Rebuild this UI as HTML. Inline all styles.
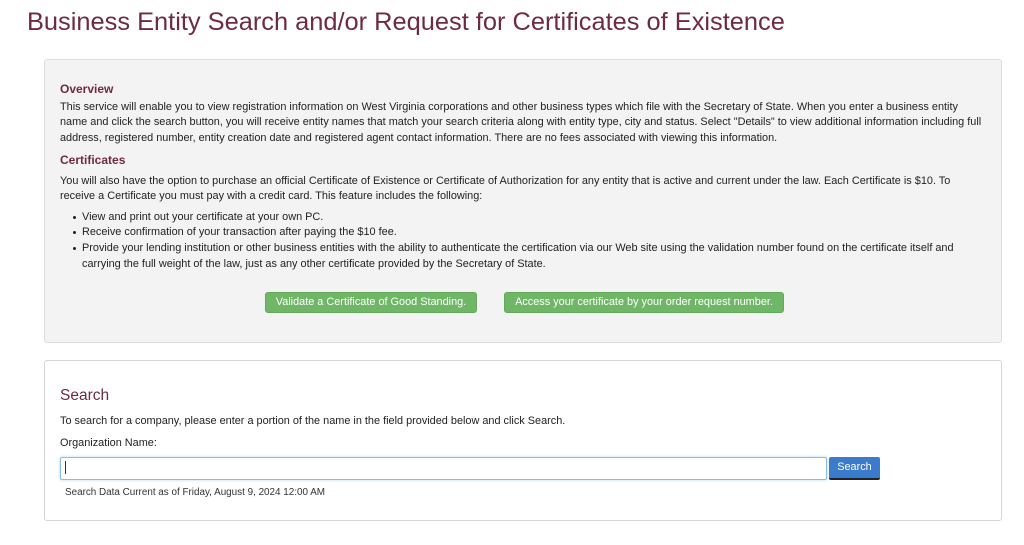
<!DOCTYPE html>
<html><head><style>
body{margin:0;width:1024px;height:545px;background:#fff;font-family:"Liberation Sans",Arial,sans-serif;position:relative;overflow:hidden;color:#222}
.a{position:absolute;white-space:nowrap}
.t{font-size:10.9px;left:60px}
h1{position:absolute;left:27px;top:8px;margin:0;font-weight:normal;font-size:25.4px;color:#6e2b3f}
.h{font-weight:bold;font-size:12px;color:#6e2b3f;left:60px}
.p1{position:absolute;left:44px;top:59px;width:956px;height:282px;background:#f3f3f3;border:1px solid #ddd;border-radius:3px}
.p2{position:absolute;left:44px;top:360px;width:956px;height:159px;background:#fff;border:1px solid #d6d6d6;border-radius:3px}
.btn{position:absolute;top:292px;height:19px;background:#6fb766;border-radius:3px;color:#fff;font-size:10.9px;line-height:19px;text-align:center;border:1px solid #62a95a}
.d{position:absolute;left:73px;width:3px;height:3px;border-radius:50%;background:#222}
</style></head><body>
<h1>Business Entity Search and/or Request for Certificates of Existence</h1>
<div class="p1"></div>
<div class="a h" style="top:82px">Overview</div>
<div class="a t" style="top:101px">This service will enable you to view registration information on West Virginia corporations and other business types which file with the Secretary of State. When you enter a business entity</div>
<div class="a t" style="top:116px">name and click the search button, you will receive entity names that match your search criteria along with entity type, city and status. Select "Details" to view additional information including full</div>
<div class="a t" style="top:132px">address, registered number, entity creation date and registered agent contact information. There are no fees associated with viewing this information.</div>
<div class="a h" style="top:153px">Certificates</div>
<div class="a t" style="top:175px">You will also have the option to purchase an official Certificate of Existence or Certificate of Authorization for any entity that is active and current under the law. Each Certificate is $10. To</div>
<div class="a t" style="top:190px">receive a Certificate you must pay with a credit card. This feature includes the following:</div>
<div class="d" style="top:216px"></div><div class="a t" style="left:82px;top:211px">View and print out your certificate at your own PC.</div>
<div class="d" style="top:231px"></div><div class="a t" style="left:82px;top:226px">Receive confirmation of your transaction after paying the $10 fee.</div>
<div class="d" style="top:247px"></div><div class="a t" style="left:82px;top:242px">Provide your lending institution or other business entities with the ability to authenticate the certification via our Web site using the validation number found on the certificate itself and</div>
<div class="a t" style="left:82px;top:258px">carrying the full weight of the law, just as any other certificate provided by the Secretary of State.</div>
<div class="btn" style="left:265px;width:210px">Validate a Certificate of Good Standing.</div>
<div class="btn" style="left:504px;width:278px">Access your certificate by your order request number.</div>
<div class="p2"></div>
<div class="a" style="left:60px;top:387px;font-size:15.5px;color:#6e2b3f">Search</div>
<div class="a t" style="top:415px">To search for a company, please enter a portion of the name in the field provided below and click Search.</div>
<div class="a t" style="top:437px">Organization Name:</div>
<div class="a" style="left:60px;top:457px;width:765px;height:21px;border:1px solid #8fb9e8;border-radius:2px;box-shadow:0 0 3px #b9d5f3;background:#fff"></div>
<div class="a" style="left:65px;top:461px;width:1px;height:13px;background:#333"></div>
<div class="a" style="left:829px;top:457px;width:51px;height:21px;background:#3a7bcc;border-bottom:2px solid #222;border-radius:2px;color:#fff;font-size:10.9px;line-height:21px;text-align:center">Search</div>
<div class="a" style="left:65px;top:487px;font-size:9.9px;color:#333">Search Data Current as of Friday, August 9, 2024 12:00 AM</div>
</body></html>
